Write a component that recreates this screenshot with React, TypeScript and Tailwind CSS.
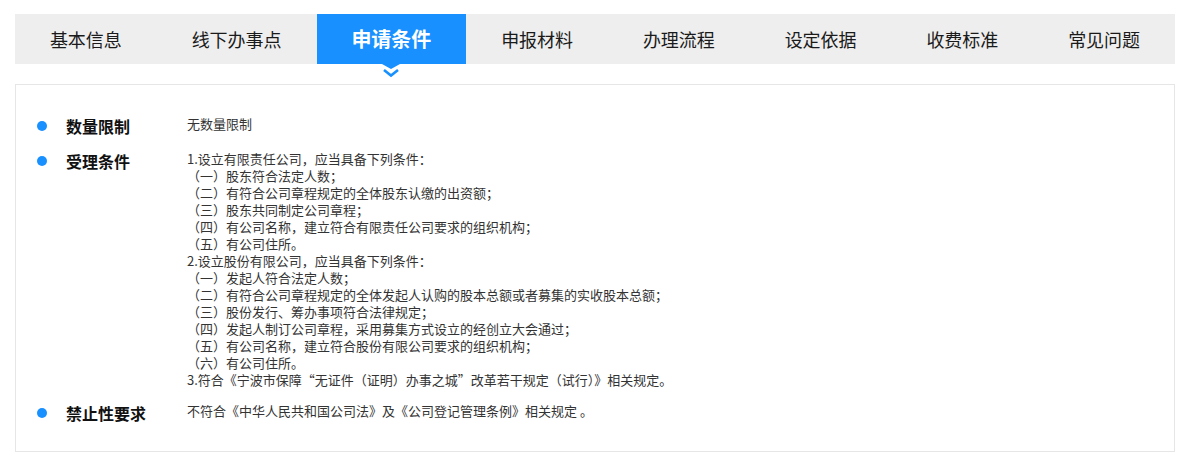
import React from "react";

const tabs = ["基本信息", "线下办事点", "申请条件", "申报材料", "办理流程", "设定依据", "收费标准", "常见问题"];

const conditions = [
  "1.设立有限责任公司，应当具备下列条件：",
  "（一）股东符合法定人数；",
  "（二）有符合公司章程规定的全体股东认缴的出资额；",
  "（三）股东共同制定公司章程；",
  "（四）有公司名称，建立符合有限责任公司要求的组织机构；",
  "（五）有公司住所。",
  "2.设立股份有限公司，应当具备下列条件：",
  "（一）发起人符合法定人数；",
  "（二）有符合公司章程规定的全体发起人认购的股本总额或者募集的实收股本总额；",
  "（三）股份发行、筹办事项符合法律规定；",
  "（四）发起人制订公司章程，采用募集方式设立的经创立大会通过；",
  "（五）有公司名称，建立符合股份有限公司要求的组织机构；",
  "（六）有公司住所。",
  "3.符合《宁波市保障“无证件（证明）办事之城”改革若干规定（试行）》相关规定。",
];

function Row({ label, children }: { label: string; children: React.ReactNode }) {
  return (
    <div className="flex items-start">
      <div className="flex items-center h-[22px] w-[29px]">
        <span className="block w-[10px] h-[10px] rounded-full bg-[#1890ff]" />
      </div>
      <div className="w-[121px] shrink-0 text-[16px] leading-[22px] font-bold text-[#111]">{label}</div>
      <div className="text-[13px] leading-[17px] text-[#333]">{children}</div>
    </div>
  );
}

export default function App() {
  return (
    <div
      lang="zh-CN"
      className="w-[1190px] h-[464px] bg-white px-[15px] pt-[14px]"
      style={{ fontFamily: '"Microsoft YaHei", "Noto Sans CJK SC", sans-serif' }}
    >
      <div className="relative flex h-[50px] bg-[#eeeeee]">
        {tabs.map((t, i) =>
          i === 2 ? (
            <div
              key={t}
              className="relative flex-auto flex items-center justify-center bg-[#1890ff] text-white text-[20px] font-bold"
            >
              {t}
              <svg
                className="absolute left-1/2 -translate-x-1/2 top-[50px]"
                width="20"
                height="14"
                viewBox="0 0 20 14"
              >
                <polygon points="1,0 19,0 10,5" fill="#1890ff" />
                <polyline
                  points="3,6 10,11.5 17,6"
                  fill="none"
                  stroke="#1890ff"
                  strokeWidth="2.6"
                />
              </svg>
            </div>
          ) : (
            <div key={t} className="flex-auto flex items-center justify-center text-[18px] text-[#1a1a1a]">
              {t}
            </div>
          )
        )}
      </div>
      <div className="mt-[20px] border border-[#e6e6e6] h-[368px] pt-[30px] pl-[21px] flex flex-col gap-[13px]">
        <Row label="数量限制">
          <div>无数量限制</div>
        </Row>
        <Row label="受理条件">
          {conditions.map((c, i) => (
            <div key={i}>{c}</div>
          ))}
        </Row>
        <div className="mt-[1px]">
          <Row label="禁止性要求">
            <div>不符合《中华人民共和国公司法》及《公司登记管理条例》相关规定 。</div>
          </Row>
        </div>
      </div>
    </div>
  );
}
